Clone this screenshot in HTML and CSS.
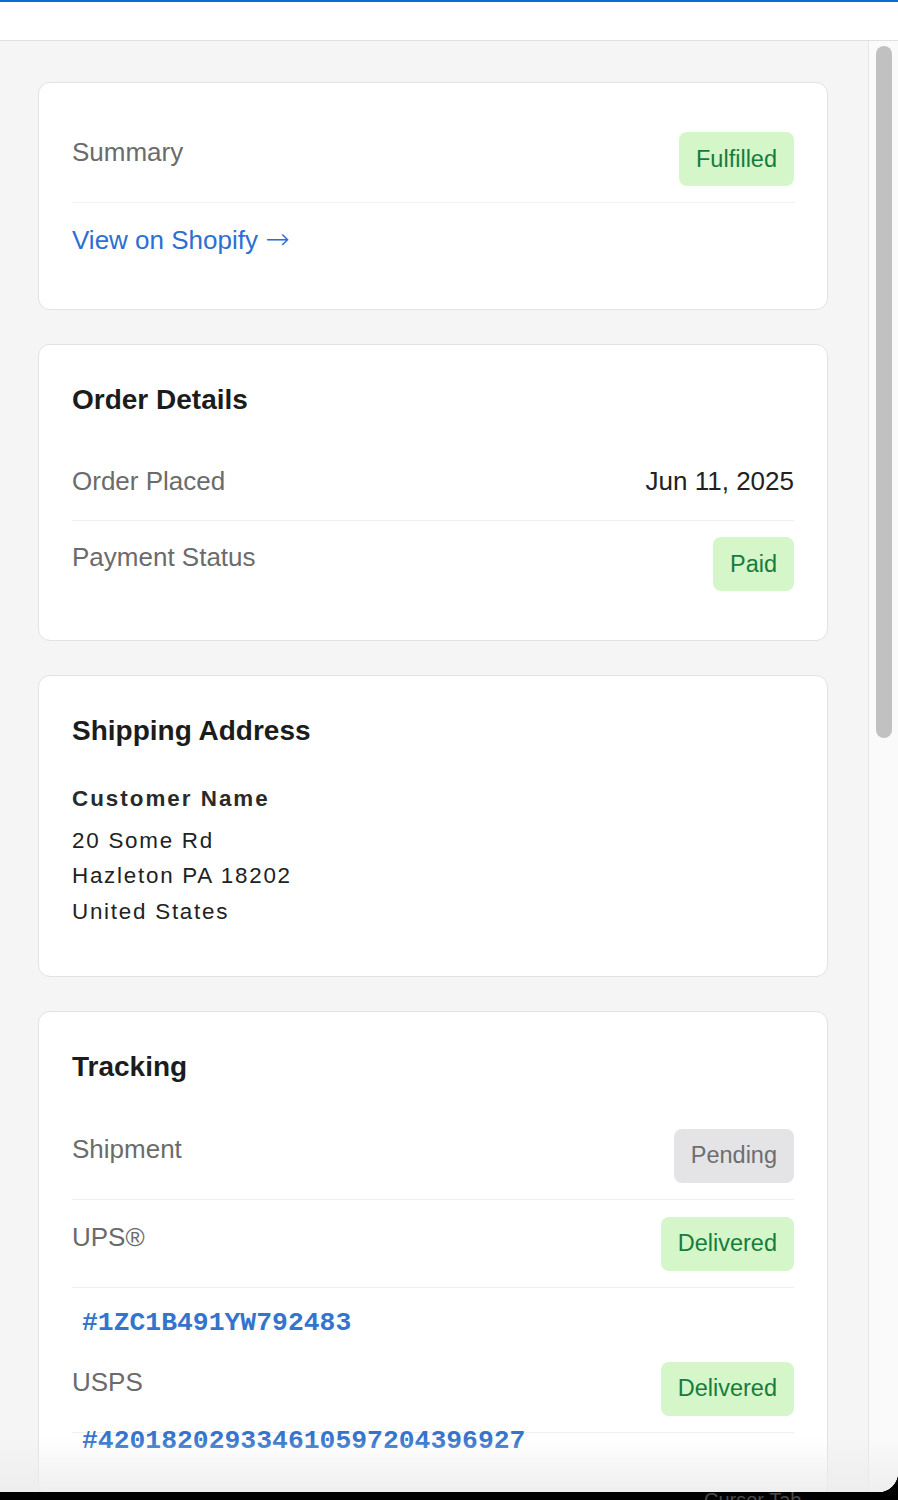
FILE: index.html
```html
<!DOCTYPE html>
<html lang="en">
<head>
<meta charset="utf-8">
<title>Order</title>
<link rel="stylesheet" href="styles.css">
</head>
<body>
<div class="window">
  <div class="topline"></div>
  <header class="toolbar"></header>
  <div class="viewport">
    <main class="content">
      <section class="card">
        <div class="row">
          <span class="label">Summary</span>
          <span class="badge badge-green">Fulfilled</span>
        </div>
        <div class="row row-last row-link">
          <a class="link" href="#">View on Shopify <span class="arrow">→</span></a>
        </div>
      </section>

      <section class="card">
        <h2 class="title">Order Details</h2>
        <div class="row row-first">
          <span class="label">Order Placed</span>
          <span class="value">Jun 11, 2025</span>
        </div>
        <div class="row row-last row-end">
          <span class="label">Payment Status</span>
          <span class="badge badge-green">Paid</span>
        </div>
      </section>

      <section class="card">
        <h2 class="title">Shipping Address</h2>
        <div class="name">Customer Name</div>
        <div class="address">
          <div>20 Some Rd</div>
          <div>Hazleton PA 18202</div>
          <div>United States</div>
        </div>
      </section>

      <section class="card card-tracking">
        <h2 class="title">Tracking</h2>
        <div class="row row-t">
          <span class="label">Shipment</span>
          <span class="badge badge-gray">Pending</span>
        </div>
        <div class="row row-t">
          <span class="label">UPS®</span>
          <span class="badge badge-green">Delivered</span>
        </div>
        <div class="tracking"><a class="tracking-link" href="#">#1ZC1B491YW792483</a></div>
        <div class="row row-t">
          <span class="label">USPS</span>
          <span class="badge badge-green">Delivered</span>
        </div>
        <div class="tracking tracking-tight"><a class="tracking-link" href="#">#420182029334610597204396927</a></div>
      </section>
    </main>
    <div class="scrollbar"><div class="thumb"></div></div>
    <div class="fade"></div>
  </div>
</div>
<div class="taskbar"><span class="taskbar-text">Cursor Tab</span></div>
</body>
</html>
```
FILE: styles.css
```css
html, body {
  margin: 0;
  padding: 0;
}
body {
  width: 898px;
  height: 1500px;
  overflow: hidden;
  background: #000;
  font-family: "Liberation Sans", Arial, Helvetica, sans-serif;
  display: flex;
  flex-direction: column;
}
.window {
  height: 1492px;
  flex: 0 0 1492px;
  background: #fff;
  border-bottom-right-radius: 20px;
  overflow: hidden;
  display: flex;
  flex-direction: column;
}
.topline {
  height: 2px;
  flex: 0 0 2px;
  background: #0b6bd0;
}
.toolbar {
  height: 38px;
  flex: 0 0 38px;
  background: #fff;
  border-bottom: 1px solid #e0e0e0;
}
.viewport {
  flex: 1;
  display: flex;
  background: #f5f5f5;
  position: relative;
  overflow: hidden;
}
.content {
  flex: 1;
  padding: 41px 40px 0 38px;
  display: flex;
  flex-direction: column;
  gap: 34px;
  min-width: 0;
}
.card {
  flex-shrink: 0;
  background: #fff;
  border: 1px solid #e2e2e2;
  border-radius: 12px;
  padding: 33px;
}
.title {
  margin: 0 0 22.5px 0;
  font-size: 28px;
  line-height: 44.8px;
  font-weight: 700;
  color: #1c1c1c;
}
.row {
  display: flex;
  justify-content: space-between;
  align-items: flex-start;
  padding: 16px 0;
  border-bottom: 1px solid #efefef;
}
.row-first {
  padding-bottom: 17.5px;
}
.row-last {
  border-bottom: none;
}
.row-link {
  padding-bottom: 14.5px;
}
.row-end {
  padding-bottom: 15.5px;
}
.row-t {
  padding: 16.5px 0;
}
.label {
  font-size: 26px;
  line-height: 41.6px;
  color: #6b6b6b;
}
.value {
  font-size: 26px;
  line-height: 41.6px;
  color: #222;
}
.link {
  font-size: 26px;
  line-height: 41.6px;
  color: #2b6fd3;
  text-decoration: none;
}
.arrow {
  font-family: "DejaVu Sans", sans-serif;
  font-size: 29px;
  font-weight: 300;
}
.badge {
  display: inline-flex;
  align-items: center;
  height: 54px;
  padding: 0 17px;
  border-radius: 8px;
  font-size: 23.5px;
  box-sizing: border-box;
}
.badge-green {
  background: #d4f6c8;
  color: #167c3e;
}
.badge-gray {
  background: #e4e4e7;
  color: #6e6e6e;
}
.name {
  padding-top: 4.5px;
  font-size: 22.4px;
  line-height: 35.84px;
  font-weight: 700;
  letter-spacing: 2px;
  color: #2a2a2a;
}
.address {
  margin: 6px 0 13px 0;
  font-size: 22.4px;
  line-height: 35.84px;
  letter-spacing: 1.75px;
  color: #222;
}
.tracking {
  padding: 15px 0 0 10px;
  line-height: 40px;
}
.tracking-tight {
  padding-top: 0;
  margin-top: -12px;
  position: relative;
}
.tracking-link {
  font-family: "Liberation Mono", "Courier New", monospace;
  font-weight: 700;
  font-size: 26.4px;
  color: #3474cc;
  text-decoration: none;
}
.scrollbar {
  flex: 0 0 29px;
  width: 29px;
  border-left: 1px solid #e6e6e6;
  background: #fafafa;
}
.thumb {
  width: 16px;
  height: 692px;
  margin: 5px 0 0 7px;
  border-radius: 8px;
  background: #c1c1c1;
}
.fade {
  position: absolute;
  left: 0;
  right: 0;
  bottom: 0;
  height: 55px;
  background: linear-gradient(to bottom, rgba(255,255,255,0), rgba(236,236,236,0.85));
  pointer-events: none;
}
.taskbar {
  flex: 1;
  background: #000;
  overflow: hidden;
  position: relative;
}
.taskbar-text {
  display: block;
  margin: 0 0 0 704px;
  font-size: 20px;
  line-height: 16px;
  color: #4a4a4a;
}
```
